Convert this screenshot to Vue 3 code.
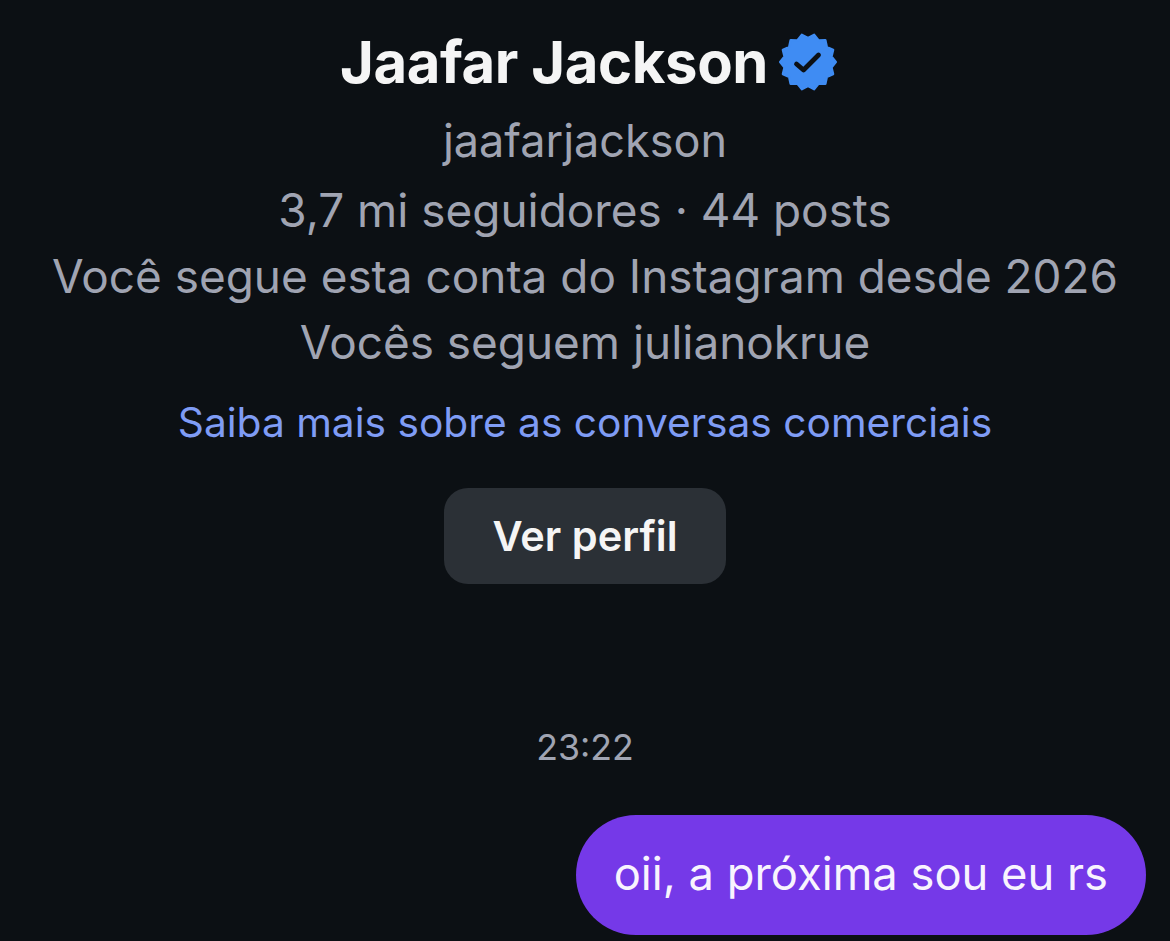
<template>
  <div class="screen">
    <section class="profile">
      <div class="nameRow">
        <h1 class="name">Jaafar Jackson</h1>
        <svg class="badge" viewBox="0 0 60 60" aria-label="Verificado">
          <polygon :points="badgePoints" fill="#3f8cf3" stroke="#3f8cf3" stroke-width="2.5" stroke-linejoin="round" />
          <path d="M18.5 32 L25.5 38 L40.5 23" fill="none" stroke="#0c1014" stroke-width="4.8" stroke-linecap="round" stroke-linejoin="round" />
        </svg>
      </div>
      <p class="handle">jaafarjackson</p>
      <p class="line first">3,7 mi seguidores · 44 posts</p>
      <p class="line">Você segue esta conta do Instagram desde 2026</p>
      <p class="line">Vocês seguem julianokrue</p>
      <a class="learnMore" href="#">Saiba mais sobre as conversas comerciais</a>
      <button class="profileButton" type="button">Ver perfil</button>
    </section>
    <p class="time">23:22</p>
    <div class="messages">
      <div class="bubble">oii, a próxima sou eu rs</div>
    </div>
  </div>
</template>

<script setup>
// 14 tips, with a valley on the top centre line
const tips = 14
const badgePoints = Array.from({ length: tips * 2 }, (_, i) => {
  const r = i % 2 === 0 ? 24 : 27.8
  const a = (Math.PI * i) / tips - Math.PI / 2
  return `${(30 + r * Math.cos(a)).toFixed(2)},${(30 + r * Math.sin(a)).toFixed(2)}`
}).join(' ')
</script>

<style scoped>
.screen {
  height: 941px;
  overflow: hidden;
  background-color: #0c1014;
  font-family: Inter, "Liberation Sans", sans-serif;
  display: flex;
  flex-direction: column;
  box-sizing: border-box;
  padding-top: 30px;
}

.profile {
  display: flex;
  flex-direction: column;
  align-items: center;
  text-align: center;
}

.nameRow {
  display: flex;
  align-items: center;
  justify-content: center;
  height: 64px;
  gap: 10px;
  margin-left: 8px;
}

.name {
  margin: 0;
  font-size: 58px;
  font-weight: 700;
  letter-spacing: -0.4px;
  color: #f5f5f5;
}

.badge {
  width: 60px;
  height: 60px;
}

.handle,
.line {
  margin: 0;
  font-size: 45.9px;
  line-height: 66px;
  color: #a0a4b2;
}

.handle {
  margin-top: 14px;
  font-size: 45px;
}

.line.first {
  margin-top: 4px;
}

.learnMore {
  margin-top: 24px;
  font-size: 40.7px;
  line-height: 46px;
  color: #7f9cf5;
  text-decoration: none;
}

.profileButton {
  margin-top: 42px;
  width: 282px;
  height: 96px;
  border: none;
  border-radius: 24px;
  background-color: #2b3036;
  color: #f5f5f5;
  font-family: inherit;
  font-size: 41.5px;
  font-weight: 600;
}

.time {
  margin: 142px 0 0;
  text-align: center;
  font-size: 35.7px;
  line-height: 42px;
  color: #a0a4b2;
}

.messages {
  display: flex;
  justify-content: flex-end;
  margin-top: 47px;
  padding-right: 24px;
}

.bubble {
  height: 120px;
  padding: 0 38px;
  border-radius: 60px;
  background-color: #7539e8;
  color: #f8f4fe;
  font-size: 45.3px;
  line-height: 118px;
}
</style>

<style>
html,
body {
  margin: 0;
  background: #0c1014;
}
</style>
